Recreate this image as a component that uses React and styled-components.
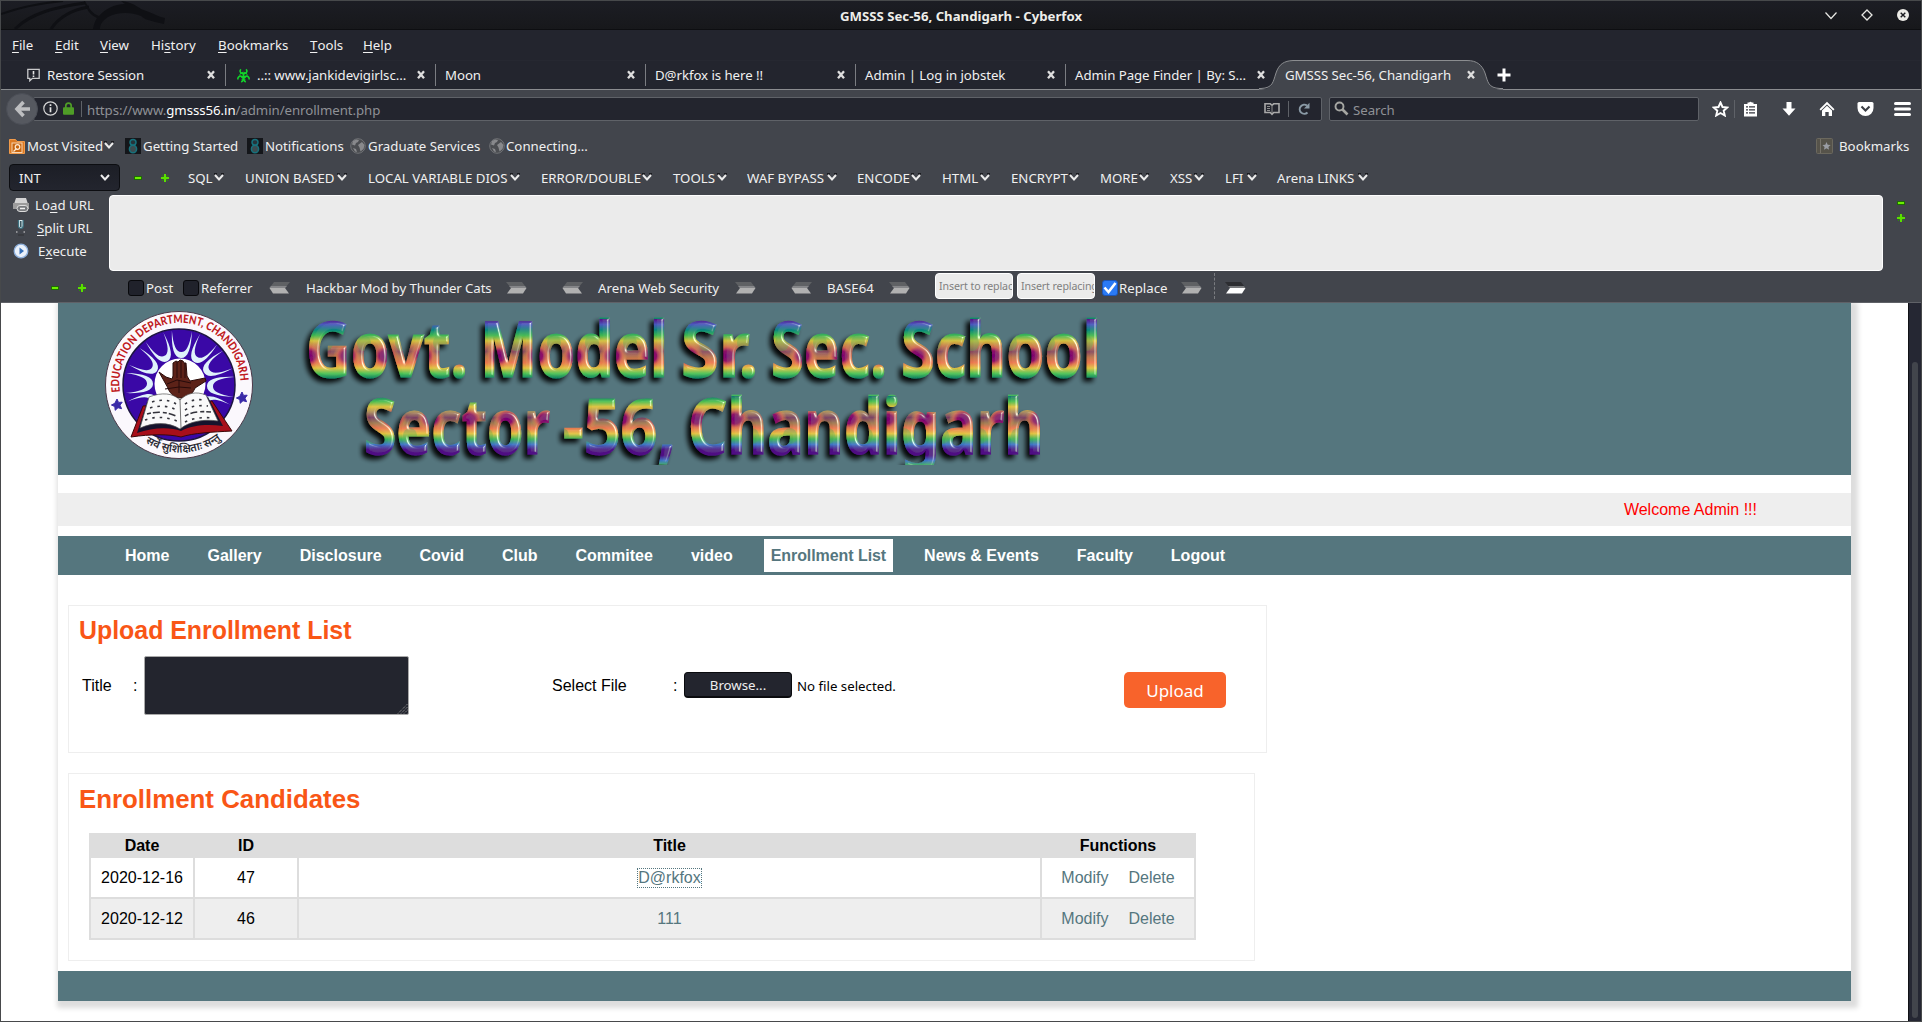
import React from "react";
import styled, { createGlobalStyle, css } from "styled-components";

const teal = "#55767e";
const chrome = "#42454c";
const dark = "#23252e";
const ui = `"Noto Sans", "Open Sans", sans-serif`;
const arial = `"Liberation Sans", Arial, sans-serif`;

const Global = createGlobalStyle`
  * { box-sizing: border-box; }
  html, body { margin: 0; padding: 0; background: ${chrome}; overflow: hidden; }
  svg { display: block; flex: none; }
`;

/* ---------- window ---------- */
const Window = styled.div`
  width: 1922px;
  height: 1022px;
  border: 1px solid #47494b;
  display: flex;
  flex-direction: column;
  background: ${chrome};
  font: 13.25px/18px ${ui};
  color: #f0f0f0;
  white-space: pre;
`;

const TitleBar = styled.header`
  position: relative;
  height: 29px;
  flex: none;
  display: flex;
  align-items: center;
  justify-content: center;
  padding: 2px 0 0 0;
  background: linear-gradient(#1c1d24, #17181b);
  border-bottom: 1px solid #0d0e11;
  font-weight: 700;
  font-size: 13.2px;
  color: #eeeeea;
`;
const Dragon = styled.svg`
  position: absolute;
  left: 0;
  top: 0;
`;
const WindowButtons = styled.div`
  position: absolute;
  right: 12px;
  top: 7px;
  display: flex;
  gap: 24px;
`;

const Bar = styled.div`
  flex: none;
  display: flex;
  align-items: center;
  height: ${(p) => p.$h}px;
  padding-left: ${(p) => p.$pl || 0}px;
  background: ${(p) => p.$bg || "transparent"};
`;
const Slot = styled.div`
  flex: none;
  display: flex;
  align-items: center;
  width: ${(p) => p.$w}px;
  letter-spacing: ${(p) => (p.$tight ? "-0.1px" : "normal")};
`;
const Spacer = styled.div`
  flex: 1;
`;
const Key = styled.span`
  text-decoration: underline;
  text-underline-offset: 2px;
`;

/* ---------- tabs ---------- */
const TabStrip = styled.nav`
  flex: none;
  display: flex;
  align-items: center;
  height: 30px;
  padding-left: 15px;
  background: ${dark};
  border-top: 1px solid #262831;
  border-bottom: 1px solid #8b8d90;
`;
const Tab = styled.div`
  position: relative;
  flex: none;
  width: 210px;
  height: 22px;
  display: flex;
  align-items: center;
  gap: 7px;
  padding: 0 9px 0 ${(p) => (p.$icon ? 11 : 9)}px;
  border-right: 1px solid ${(p) => (p.$last ? "transparent" : "#7b7d82")};
`;
const TabLabel = styled.span`
  position: relative;
  flex: 1;
  min-width: 0;
  letter-spacing: -0.06px;
`;
const TabShape = styled.svg`
  position: absolute;
  left: -17px;
  top: -4px;
`;
const CloseWrap = styled.span`
  position: relative;
`;

/* ---------- navigation ---------- */
const NavBar = styled.div`
  flex: none;
  display: flex;
  align-items: center;
  height: 37px;
  padding: 0 10px 0 5px;
`;
const BackButton = styled.div`
  flex: none;
  position: relative;
  z-index: 1;
  width: 32px;
  height: 32px;
  margin-right: -5px;
  border-radius: 50%;
  background: #565960;
  border: 1px solid #4b4e56;
  display: flex;
  align-items: center;
  justify-content: center;
`;
const Field = styled.div`
  flex: none;
  display: flex;
  align-items: center;
  height: 24px;
  width: ${(p) => p.$w}px;
  background: ${dark};
  border: 1px solid #5f6268;
  border-radius: 2px;
  color: #8f9196;
  padding-left: ${(p) => p.$pl}px;
`;
const FieldText = styled.span`
  padding-top: 2px;
  letter-spacing: -0.06px;
  b {
    font-weight: 400;
    color: #fff;
  }
`;
const Divider = styled.i`
  width: 1px;
  height: ${(p) => p.$h || 16}px;
  background: #5f6268;
  margin: ${(p) => p.$m || "0"};
`;
const Tools = styled.div`
  display: flex;
  align-items: center;
  flex: 1;
  padding-left: 13px;
`;

/* ---------- hackbar ---------- */
const Select = styled.div`
  width: 111px;
  height: 27px;
  display: flex;
  align-items: center;
  justify-content: space-between;
  padding: 0 9px;
  background: linear-gradient(#1c1e26, #23252e);
  border: 1px solid #0c0d11;
  border-radius: 4px;
  margin-right: 14px;
`;
const Menu = styled.div`
  display: flex;
  align-items: center;
  width: ${(p) => p.$w}px;
  flex: none;
`;
const MenuText = styled.span`
  width: ${(p) => p.$w}px;
`;
const EditorRow = styled.div`
  flex: none;
  display: flex;
  height: 76px;
  margin-top: 4px;
`;
const Actions = styled.div`
  width: 108px;
  display: flex;
  flex-direction: column;
  gap: 5px;
  padding: 1px 0 0 12px;
`;
const Action = styled.div`
  display: flex;
  align-items: center;
  height: 18px;
`;
const ActionIcon = styled.span`
  width: ${(p) => p.$w}px;
`;
const Editor = styled.div`
  width: 1774px;
  background: #ebebeb;
  border: 1px solid #fdfdfd;
  border-radius: 4px;
`;
const Resizers = styled.div`
  display: flex;
  flex-direction: column;
  padding: 4px 0 0 14px;
  gap: 7px;
`;
const OptionBar = styled.div`
  flex: none;
  display: flex;
  align-items: center;
  height: 32px;
  padding: 2px 0 0 50px;
  border-bottom: 1px solid #5f6167;
`;
const Check = styled.span`
  width: 16px;
  height: 16px;
  border-radius: 3px;
  background: ${(p) => (p.$on ? "#2a7af5" : "#20222b")};
  border: 1px solid ${(p) => (p.$on ? "#1b55b8" : "#08090c")};
  margin-right: ${(p) => (p.$on ? 1 : 2)}px;
  display: flex;
  align-items: center;
  justify-content: center;
`;
const MiniInput = styled.div`
  width: 78px;
  height: 26px;
  margin: -4px 4px 0 0;
  overflow: hidden;
  background: #ebebeb;
  border: 1px solid #fff;
  border-radius: 4px;
  color: #808080;
  font-size: 10.6px;
  letter-spacing: -0.1px;
  line-height: 24px;
  padding-left: 3px;
`;
const Dashed = styled.i`
  height: 26px;
  border-left: 1px dashed #7a7c80;
  margin: -3px 10px 0 0;
`;

/* ---------- page ---------- */
const Viewport = styled.div`
  flex: 1;
  min-height: 0;
  display: flex;
  background: #fff;
  overflow: hidden;
`;
const Page = styled.div`
  flex: 1;
  padding-left: 57px;
  font: 16px/18px ${arial};
  color: #000;
`;
const Sheet = styled.div`
  width: 1793px;
  height: 698px;
  background: #fff;
  box-shadow: 3px 3px 5px 4px #ddd;
  display: flex;
  flex-direction: column;
`;
const Banner = styled.div`
  height: 172px;
  flex: none;
  display: flex;
  background: ${teal};
  padding: 7px 0 0 47px;
`;
const Welcome = styled.div`
  flex: none;
  margin: 18px 0 10px;
  height: 33px;
  background: #eee;
  color: #f00;
  display: flex;
  align-items: center;
  justify-content: flex-end;
  padding-right: 94px;
`;
const SiteNav = styled.nav`
  flex: none;
  height: 39px;
  background: ${teal};
  display: flex;
  align-items: center;
  gap: 24px;
  padding-left: 60px;
  margin-bottom: 30px;
`;
const NavLink = styled.a`
  height: 33px;
  line-height: 33px;
  padding: 0 7px;
  font-weight: 700;
  color: #fff;
  ${(p) =>
    p.$active &&
    css`
      color: ${teal};
      background: #fff;
      letter-spacing: -0.07px;
    `}
`;
const Panel = styled.section`
  flex: none;
  width: ${(p) => p.$w}px;
  height: ${(p) => p.$h}px;
  margin: 0 0 ${(p) => p.$mb}px 10px;
  border: 1px solid #eee;
`;
const Heading = styled.h2`
  margin: ${(p) => p.$mt}px 0 0 10px;
  font: 700 ${(p) => p.$size}px/30px ${arial};
  color: #f95616;
`;
const Form = styled.div`
  display: flex;
  align-items: center;
  height: 60px;
  margin-top: 10px;
  padding-left: 13px;
`;
const FormText = styled.span`
  width: ${(p) => p.$w}px;
  padding-top: 2px;
`;
const TextArea = styled.div`
  width: 265px;
  height: 59px;
  background: ${dark};
  border: 1px solid #a9a9a9;
  border-radius: 2px;
  display: flex;
  align-items: flex-end;
  justify-content: flex-end;
  margin-right: 143px;
`;
const Browse = styled.div`
  width: 108px;
  height: 26px;
  border-radius: 4px;
  border: 1px solid #0a0b0e;
  border-bottom-width: 2px;
  background: ${dark};
  color: #eee;
  font: 13.25px/25px ${ui};
  text-align: center;
  margin: 0 5px 0 0;
`;
const FileName = styled.span`
  font: 13.25px/18px ${ui};
  width: 327px;
  padding-top: 1px;
`;
const Upload = styled.div`
  width: 102px;
  height: 36px;
  margin-top: 10px;
  border-radius: 5px;
  background: #f8632b;
  color: #fff;
  font: 17px/38px ${ui};
  text-align: center;
`;
const Table = styled.div`
  width: 1107px;
  margin: 19px 0 0 20px;
  padding: 0 2px 2px;
  background: #ddd;
  display: grid;
  grid-template-columns: 102px 102px 741px 152px;
  grid-template-rows: 25px 39px 41px;
  column-gap: 2px;
`;
const HeadCell = styled.div`
  font-weight: 700;
  line-height: 25px;
  text-align: center;
`;
const Cell = styled.div`
  display: flex;
  align-items: center;
  justify-content: center;
  gap: 20px;
  background: ${(p) => (p.$alt ? "#eee" : "#fff")};
  margin-top: ${(p) => (p.$alt ? 2 : 0)}px;
  height: 39px;
`;
const Link = styled.a`
  color: ${teal};
  line-height: 18px;
  outline: ${(p) => (p.$focus ? `1px dotted ${teal}` : "none")};
`;
const Footer = styled.div`
  flex: none;
  height: 30px;
  background: ${teal};
`;
const ScrollTrack = styled.div`
  width: 13px;
  background: #252733;
  border-left: 1px solid #101116;
  padding: 59px 0 3px 3px;
`;
const ScrollThumb = styled.div`
  width: 6px;
  height: 100%;
  border-radius: 3px;
  background: #42454c;
`;

/* ---------- icons ---------- */
const Chevron = () => (
  <svg width="10" height="9" viewBox="0 0 10 9">
    <path d="M0 0h3v1.500H0zM7 0h3v1.500H7z" fill="#1a1b1f" />
    <path d="M1 2l4 4.500 4-4.500" fill="none" stroke="#ececec" strokeWidth="2" />
  </svg>
);
const Minus = () => (
  <svg width="8" height="8" viewBox="0 0 8 8">
    <rect x="0" y="2" width="8" height="4" fill="#1f6b06" />
    <rect x="1" y="3" width="6" height="2" fill="#6bf000" />
  </svg>
);
const Plus = () => (
  <svg width="8" height="8" viewBox="0 0 8 8">
    <path d="M3 0h2v3h3v2H5v3H3V5H0V3h3z" fill="#5ae000" />
    <path d="M1 1h1v1H1zM6 1h1v1H6zM1 6h1v1H1zM6 6h1v1H6zM2 2h1v1H2zM5 2h1v1H5zM2 5h1v1H2zM5 5h1v1H5z" fill="#2f8a08" />
  </svg>
);
const Close = () => (
  <svg width="10" height="10" viewBox="0 0 10 10">
    <path d="M2 1.300l6 7M8 1.300l-6 7" stroke="#dedede" strokeWidth="2.300" />
  </svg>
);
const FlippedSvg = styled.svg`
  transform: ${(p) => (p.$flip ? "scaleX(-1)" : "none")};
`;
const Arrow = ({ flip, white }) => (
  <FlippedSvg $flip={flip} width="21" height="12" viewBox="0 0 21 12">
    <path d="M0 0H16L20.500 6H5z" fill={white ? "#2c2d31" : "#5f6164"} />
    <path d="M3 4H19L20.500 6H5z" fill={white ? "#77797c" : "#858689"} />
    <path d="M5 6H20.500L17 11.500H1z" fill={white ? "#ffffff" : "#b1b1b1"} />
  </FlippedSvg>
);
const HorseIcon = () => (
  <svg width="16" height="16" viewBox="0 0 16 16">
    <rect width="16" height="16" fill="#14161a" />
    <ellipse cx="8" cy="4.300" rx="3" ry="2.900" fill="#26343a" stroke="#17717c" strokeWidth="1.500" />
    <ellipse cx="8" cy="11" rx="3.600" ry="3.700" fill="#3d4c50" stroke="#17717c" strokeWidth="1.500" />
  </svg>
);
const Globe = () => (
  <svg width="16" height="16" viewBox="0 0 16 16">
    <circle cx="8" cy="8" r="7.300" fill="#4b4d51" stroke="#707276" />
    <path d="M3 3l3-1.500 3 .5-1 2-2 1-1 2.500-3-1zM8 7l4-3 2.500 3-1 4-3 2.500-1-4zM3 10l3 1 1 3-2-.5z" fill="#88898c" />
  </svg>
);
const FeedFolder = () => (
  <svg width="16" height="16" viewBox="0 0 16 16">
    <path d="M.5 1.500h6l1.500 2h7.500v12H.5z" fill="#dd7a22" stroke="#f19b4b" />
    <rect x="3" y="5" width="10" height="9.500" fill="#c7650f" stroke="#f8d6b4" />
    <circle cx="8.500" cy="9" r="2.300" fill="none" stroke="#ffe9d2" strokeWidth="1.200" />
    <path d="M4.500 13.500l3-3" stroke="#ffe9d2" strokeWidth="1.200" />
  </svg>
);
const Notice = () => (
  <svg width="13" height="14" viewBox="0 0 13 14">
    <path d="M.8 1.300h11.400v9H5.500L2.800 12.800V10.300H.8z" fill="none" stroke="#c9cacc" strokeWidth="1.300" />
    <path d="M6.500 3v3.500M6.500 7.500v1.500" stroke="#e4e4e4" strokeWidth="1.600" />
  </svg>
);
const Biohazard = () => (
  <svg width="13" height="15" viewBox="0 0 13 15">
    <g fill="none" stroke="#12d42a">
      <path d="M3.800 1.200C2 3.500 3.800 5.800 6.500 5.800S11 3.500 9.200 1.200" strokeWidth="1.600" />
      <path d="M.9 11.500C.5 8.800 2.800 7.300 4.800 8.600S6.600 12.800 4.200 14" strokeWidth="1.600" />
      <path d="M12.100 11.500C12.500 8.800 10.200 7.300 8.200 8.600S6.400 12.800 8.800 14" strokeWidth="1.600" />
      <path d="M6.500 5.500v3M6.500 8L4.300 9.500M6.500 8l2.200 1.500" strokeWidth="1.800" />
      <path d="M2.800 7.500C3 5.500 4 4.300 6.500 4.300s3.500 1.200 3.700 3.200M4.500 11.800q2 1 4 0" strokeWidth="1" />
    </g>
  </svg>
);

const Titles = () => (
  <TitleBar>
    <Dragon width="170" height="28" viewBox="0 0 170 28">
      <g fill="none" stroke="#0f1014">
        <path d="M0 13C20 6 40 2 62 0" strokeWidth="2" />
        <path d="M14 28C30 12 55 6 84 2" strokeWidth="3" />
        <path d="M50 28C58 16 70 9 88 6" strokeWidth="3" />
      </g>
      <path
        d="M84 0C88 8 92 13 98 15c6-7 15-12 26-12l-4-3c10 1 16 5 20 8l8 3c6 2 10 5 16 6l-1 6-9-2c-6-2-10-2-14-6-10-4-24-4-33 1-6 4-8 8-8 12h-7c1-5 2-8 4-11-7-3-11-9-13-17z"
        fill="#0f1014"
      />
    </Dragon>
    GMSSS Sec-56, Chandigarh - Cyberfox
    <WindowButtons>
      <svg width="12" height="14" viewBox="0 0 12 14">
        <path d="M.5 4.500l5.500 6 5.500-6" fill="none" stroke="#e8e8e4" strokeWidth="1.200" />
      </svg>
      <svg width="12" height="14" viewBox="0 0 12 14">
        <path d="M6 2l5 5-5 5-5-5z" fill="none" stroke="#e8e8e4" strokeWidth="1.300" />
      </svg>
      <svg width="12" height="14" viewBox="0 0 12 14">
        <circle cx="6" cy="7" r="6" fill="#ecebe6" />
        <path d="M3.700 4.700l4.600 4.600M8.300 4.700L3.700 9.300" stroke="#1a1b1f" strokeWidth="1.400" />
      </svg>
    </WindowButtons>
  </TitleBar>
);

const menus = [
  ["", "F", "ile", 43],
  ["", "E", "dit", 45],
  ["", "V", "iew", 51],
  ["Hi", "s", "tory", 67],
  ["", "B", "ookmarks", 92],
  ["", "T", "ools", 53],
  ["", "H", "elp", 60],
];

const tabs = [
  ["Restore Session", Notice],
  ["..:: www.jankidevigirlsc...", Biohazard],
  ["Moon"],
  ["D@rkfox is here !!"],
  ["Admin | Log in jobstek"],
  ["Admin Page Finder | By: S..."],
];

const hackMenus = [
  ["SQL", 26, 57],
  ["UNION BASED", 92, 123],
  ["LOCAL VARIABLE DIOS", 142, 173],
  ["ERROR/DOUBLE", 101, 132],
  ["TOOLS", 44, 74],
  ["WAF BYPASS", 80, 110],
  ["ENCODE", 54, 85],
  ["HTML", 38, 69],
  ["ENCRYPT", 58, 89],
  ["MORE", 39, 70],
  ["XSS", 24, 55],
  ["LFI", 22, 52],
  ["Arena LINKS", 81, 100],
];

const rays = [-4, -3, -2, -1, 0, 1, 2, 3, 4];
const Seal = () => (
  <svg width="150" height="150" viewBox="0 0 150 150">
    <defs>
      <path id="arcTop" d="M15 82A60.500 60.500 0 1 1 135 80" />
      <path id="arcBottom" d="M30 125A68 68 0 0 0 128 118" />
    </defs>
    <circle cx="74" cy="75" r="73.500" fill="#fbf8fd" stroke="#4c3a4a" strokeWidth="1" />
    <circle cx="74" cy="75" r="56" fill="#3a08a6" stroke="#1c1440" strokeWidth="1.500" />
    <g fill="#dff2fb">
      {rays.map((k) => (
        <path
          key={k}
          d="M65 21C67 36 70 42 75 42S83 36 85 21C85 38 82 48 75 48S65 38 65 21z"
          transform={`rotate(${k * 30 + 2} 75 75)`}
        />
      ))}
    </g>
    <circle cx="75" cy="74" r="25.500" fill="#fff" />
    <path
      d="M54 62l7 5 6 2 1-3V53l3-2 2 1 2-2 3 1 1 2 2 0 1 13 3 5 15-3 1 3-11 7c-3 7-7 10-14 10-6 0-11-4-13-10z"
      fill="#5c2218"
      stroke="#2b0d0a"
      strokeWidth="1"
    />
    <path d="M62 74l10-4 14 3M72 52v16M76 51v17M80 53v15M74 70v13M60 79l14-2 12 1" stroke="#260a0a" fill="none" />
    <path d="M38 96L26 127c20-3 38-3 50 0 12-4 32-5 51-6L107 91z" fill="#a80f1a" stroke="#3a0808" />
    <path d="M42 92L32 123c16-6 34-6 44-2 11-6 26-7 42-5L103 87z" fill="#16132c" />
    <path d="M44 87c13-5 24-4 31 3 7-7 16-9 26-5l12 26c-14-2-28 0-38 8-11-7-26-7-40-1z" fill="#fafafa" stroke="#555" strokeWidth=".7" />
    <path d="M75 90l1 28" stroke="#777" />
    <g stroke="#33333b" strokeWidth="1.600" strokeDasharray="2.500 5" fill="none">
      <path d="M47 92c10-3 18-2 24 2" />
      <path d="M45 98c10-3 20-2 26 2" />
      <path d="M42 104c10-3 20-2 29 2" strokeDasharray="4 2 7 3" />
      <path d="M40 110c10-4 22-3 32 1" />
      <path d="M80 94c6-4 12-5 20-4" />
      <path d="M80 100c6-4 14-5 23-4" />
      <path d="M80 106c6-4 16-5 26-4" strokeDasharray="4 2 7 3" />
      <path d="M80 112c8-4 18-5 28-4" />
    </g>
    <path d="M12 89l1.500 3.400 3.700-.2-2.200 3 1.600 3.500-3.600-1-2.800 2.600-.4-3.700-3.400-1.600 3.400-1.700z" fill="#3a2aa8" stroke="#3a2aa8" />
    <path d="M137 82l1.500 3.400 3.700-.2-2.200 3 1.600 3.500-3.600-1-2.800 2.600-.4-3.700-3.400-1.600 3.400-1.700z" fill="#3a2aa8" stroke="#3a2aa8" />
    <text fill="#c01a22" fontFamily="Lato, sans-serif" fontWeight="900" fontSize="11.500">
      <textPath href="#arcTop" textLength="196" lengthAdjust="spacingAndGlyphs">
        EDUCATION DEPARTMENT, CHANDIGARH
      </textPath>
    </text>
    <text fill="#2a2a33" fontFamily="Noto Sans, sans-serif" fontWeight="600" fontSize="11">
      <textPath href="#arcBottom" startOffset="13" textLength="80" lengthAdjust="spacingAndGlyphs">
        सर्वे सुशिक्षिताः सन्तु
      </textPath>
    </text>
  </svg>
);

const words = [
  ["Govt.", 201, 162, 67],
  ["Model", 375, 188, 67],
  ["Sr.", 576, 77, 67],
  ["Sec.", 666, 116, 67],
  ["School", 796, 200, 67],
  ["Sector", 259, 186, 144],
  ["-56,", 458, 113, 144],
  ["Chandigarh", 583, 356, 144],
];

const WordArtBox = styled.svg`
  margin-left: -150px;
`;
const bandsOne = ["#5a0a86", "#4a58c0", "#0c8a80", "#3fba52", "#d8c43c", "#c87a50", "#8a4a60", "#c0784c", "#f07a50", "#e6c640", "#4cc456", "#08806a"];
const bandsTwo = ["#0a7a70", "#48c050", "#e4c63c", "#b09060", "#7a3a62", "#a07a50", "#f07a50", "#e6c640", "#3cb858", "#3f78c8", "#520a86", "#520a86", "#3f78c8", "#48c050"];
const stops = (colors) => colors.map((c, i) => <stop key={i} offset={i / (colors.length - 1)} stopColor={c} />);

const WordArt = () => (
  <WordArtBox width="1110" height="155" viewBox="0 0 1110 155">
    <defs>
      <linearGradient id="g1" x1="0" y1="0" x2="0" y2="1">
        {stops(bandsOne)}
      </linearGradient>
      <linearGradient id="g2" x1="0" y1="0" x2="0" y2="1">
        {stops(bandsTwo)}
      </linearGradient>
      <radialGradient id="blob">
        <stop offset="0" stopColor="#780078" />
        <stop offset=".4" stopColor="#900a6a" stopOpacity=".95" />
        <stop offset=".7" stopColor="#e06a50" stopOpacity=".7" />
        <stop offset="1" stopColor="#e0b040" stopOpacity="0" />
      </radialGradient>
      <pattern id="p1" patternUnits="userSpaceOnUse" x="0" y="9" width="38" height="60">
        <rect width="38" height="60" fill="url(#g1)" />
        <ellipse cx="14" cy="37" rx="14" ry="13" fill="url(#blob)" />
        <ellipse cx="31" cy="24" rx="7" ry="8" fill="#4fae54" opacity=".35" />
      </pattern>
      <pattern id="p2" patternUnits="userSpaceOnUse" x="8" y="86" width="38" height="70">
        <rect width="38" height="70" fill="url(#g2)" />
        <ellipse cx="14" cy="23" rx="14" ry="12" fill="url(#blob)" />
        <ellipse cx="31" cy="40" rx="7" ry="8" fill="#4fae54" opacity=".35" />
      </pattern>
      <filter id="bevel" x="-5%" y="-20%" width="110%" height="140%">
        <feGaussianBlur in="SourceAlpha" stdDeviation="1.300" result="b" />
        <feSpecularLighting in="b" surfaceScale="3" specularConstant="1" specularExponent="20" lightingColor="#f2ffe8" result="s">
          <feDistantLight azimuth="-25" elevation="24" />
        </feSpecularLighting>
        <feComposite in="s" in2="SourceAlpha" operator="in" result="s2" />
        <feComposite in="SourceGraphic" in2="s2" operator="arithmetic" k1="0" k2="0.95" k3="0.75" k4="0" result="lit" />
        <feGaussianBlur in="SourceAlpha" stdDeviation="2.500" />
        <feOffset dx="-4" dy="4" result="sh" />
        <feComponentTransfer in="sh" result="sh2">
          <feFuncA type="linear" slope="0.95" />
        </feComponentTransfer>
        <feMerge>
          <feMergeNode in="sh2" />
          <feMergeNode in="lit" />
        </feMerge>
      </filter>
    </defs>
    <g filter="url(#bevel)" fontFamily="Noto Sans, Open Sans, sans-serif" fontWeight="700" fontSize="77">
      {words.map(([t, x, w, y]) => {
        const fill = y > 100 ? "url(#p2)" : "url(#p1)";
        return (
          <text key={t} x={x} y={y} textLength={w} lengthAdjust="spacingAndGlyphs" fill={fill} stroke={fill} strokeWidth="1.200">
            {t}
          </text>
        );
      })}
    </g>
  </WordArtBox>
);

const links = ["Home", "Gallery", "Disclosure", "Covid", "Club", "Commitee", "video", "Enrollment List", "News & Events", "Faculty", "Logout"];
const rows = [
  ["2020-12-16", "47", "D@rkfox"],
  ["2020-12-12", "46", "111"],
];

export default function App() {
  return (
    <Window>
      <Global />
      <Titles />
      <Bar $h={30} $pl={11} $bg={dark}>
        {menus.map(([a, k, b, w]) => (
          <Slot key={k + b} $w={w}>
            {a}
            <Key>{k}</Key>
            {b}
          </Slot>
        ))}
      </Bar>
      <TabStrip>
        {tabs.map(([label, Icon], i) => (
          <Tab key={label} $icon={!!Icon} $last={i === 5}>
            {Icon && <Icon />}
            <TabLabel>{label}</TabLabel>
            <Close />
          </Tab>
        ))}
        <Tab $last>
          <TabShape width="244" height="30" viewBox="0 0 244 30">
            <path d="M0 29.500H2C14 29 14 22 17 13 20 4 25 1 34 .500H208C218 .500 223 5 226 13 229 22 229 28 241 29.500H244V30H0z" fill={chrome} />
            <path d="M0 28.500H2C14 28 14 22 17 13 20 4 25 1 34 .500H208C218 .500 223 5 226 13 229 22 229 28 241 28.500H244" fill="none" stroke="#8b8d90" />
          </TabShape>
          <TabLabel>GMSSS Sec-56, Chandigarh</TabLabel>
          <CloseWrap>
            <Close />
          </CloseWrap>
        </Tab>
        <Slot $w={30}>
          <svg width="40" height="14" viewBox="-10 0 40 14">
            <path d="M8 .500v13M1.500 7h13" stroke="#fff" strokeWidth="3" />
          </svg>
        </Slot>
      </TabStrip>
      <NavBar>
        <BackButton>
          <svg width="17" height="18" viewBox="0 0 17 18">
            <path d="M9.500 2L3 9l6.500 7M4 9h12" fill="none" stroke="#bdbec0" strokeWidth="3.600" />
          </svg>
        </BackButton>
        <Field $w={1289} $pl={9}>
          <Slot $w={20}>
            <svg width="15" height="15" viewBox="0 0 15 15">
              <circle cx="7.500" cy="7.500" r="6.700" fill="none" stroke="#d5d5d5" strokeWidth="1.200" />
              <path d="M7.500 3.200v1.700M7.500 6.200v5" stroke="#e5e5e5" strokeWidth="1.700" />
            </svg>
          </Slot>
          <Slot $w={18}>
            <svg width="11" height="13" viewBox="0 0 11 13">
              <path d="M2.800 6V3.800a2.700 2.700 0 0 1 5.400 0V6" fill="none" stroke="#4f9d27" strokeWidth="1.700" />
              <rect x="0" y="5.300" width="11" height="7.500" rx="1" fill="#4f9d27" />
            </svg>
          </Slot>
          <Divider $m="0 5px 0 0" />
          <FieldText>
            https://www.<b>gmsss56.in</b>/admin/enrollment.php
          </FieldText>
          <Spacer />
          <svg width="16" height="14" viewBox="0 0 16 14">
            <path d="M1 1.800h5.300L8 3.300l1.700-1.500H15v8.700H9.700L8 12.300l-1.700-1.800H1z" fill="none" stroke="#a9a9a9" strokeWidth="1.600" />
            <path d="M8 3v8M3 4.500h3M3 6.500h3M3 8.500h3" stroke="#8d8d8d" />
          </svg>
          <Divider $m="0 9px 0 8px" />
          <svg width="13" height="14" viewBox="0 0 13 14">
            <path d="M9.500 10.600A4.600 4.600 0 1 1 9 3.500" fill="none" stroke="#8a9aa6" strokeWidth="2" />
            <path d="M11.500.8v5.700H6z" fill="#8a9aa6" />
          </svg>
          <Slot $w={10} />
        </Field>
        <Slot $w={7} />
        <Field $w={370} $pl={4}>
          <svg width="15" height="15" viewBox="0 0 15 15">
            <circle cx="5.500" cy="5.500" r="4" fill="none" stroke="#a5a6a2" strokeWidth="1.900" />
            <path d="M8.500 8.500l5 5" stroke="#a5a6a2" strokeWidth="2.600" />
          </svg>
          <Slot $w={4} />
          <FieldText>Search</FieldText>
        </Field>
        <Tools>
          <Slot $w={22}>
            <svg width="17" height="16" viewBox="0 0 17 16">
              <path d="M8.500 1.500l2 4.500 4.900.5-3.700 3.200 1.100 4.800-4.300-2.500-4.300 2.500 1.100-4.800L1.600 6.500l4.900-.5z" fill="none" stroke="#fff" strokeWidth="1.900" />
            </svg>
          </Slot>
          <Divider $h={18} $m="0 8px 0 0" />
          <Slot $w={39}>
            <svg width="15" height="16" viewBox="0 0 15 16">
              <path d="M1 3h3.500V1.500h1.700a1.500 1.500 0 0 1 2.600 0h1.700V3H14v12.500H1z" fill="#fff" />
              <path d="M3 5.800h2M6 5.800h6M3 8.800h2M6 8.800h6M3 11.800h2M6 11.800h6" stroke="#33353c" strokeWidth="1.300" />
            </svg>
          </Slot>
          <Slot $w={37}>
            <svg width="14" height="16" viewBox="0 0 14 16">
              <path d="M4.500 1h5v6.500h4L7 14.800.500 7.500h4z" fill="#fff" />
            </svg>
          </Slot>
          <Slot $w={38}>
            <svg width="16" height="16" viewBox="0 0 16 16">
              <path d="M8 .8l7.500 7.500-1.300 1.200L8 3.400 1.800 9.500.500 8.300z" fill="#fff" />
              <path d="M3 9.600l5-4.900 5 4.900V15H9.700v-4H6.300v4H3z" fill="#fff" />
            </svg>
          </Slot>
          <Slot $w={37}>
            <svg width="17" height="16" viewBox="0 0 17 16">
              <path d="M.5 2.500Q.5 1 2 1h13q1.500 0 1.500 1.500V7a8 8 0 0 1-16 0z" fill="#fff" />
              <path d="M4.500 5.500l4 4 4-4" fill="none" stroke="#3a3d44" strokeWidth="2.100" />
            </svg>
          </Slot>
          <svg width="17" height="16" viewBox="0 0 17 16">
            <path d="M1.500 2.500h14M1.500 8h14M1.500 13.500h14" stroke="#fff" strokeWidth="3" strokeLinecap="round" />
          </svg>
        </Tools>
      </NavBar>
      <Bar $h={37} $pl={8}>
        <Slot $w={18}><FeedFolder /></Slot>
        <Slot $w={77}>Most Visited</Slot>
        <Slot $w={21}><Chevron /></Slot>
        <Slot $w={18}><HorseIcon /></Slot>
        <Slot $w={104}>Getting Started</Slot>
        <Slot $w={18}><HorseIcon /></Slot>
        <Slot $w={85}>Notifications</Slot>
        <Slot $w={18}><Globe /></Slot>
        <Slot $w={121}>Graduate Services</Slot>
        <Slot $w={17}><Globe /></Slot>
        Connecting...
        <Spacer />
        <Slot $w={23}>
          <svg width="17" height="16" viewBox="0 0 17 16">
            <rect x=".5" y=".5" width="16" height="15" rx="1" fill="#56534a" stroke="#6b685e" />
            <path d="M4.500 1v14" stroke="#77736a" />
            <path d="M10.500 4l1.200 2.700 2.900.3-2.200 1.900.7 2.900-2.600-1.500-2.600 1.500.7-2.900L6.400 7l2.900-.3z" fill="#9a9da4" />
          </svg>
        </Slot>
        <Slot $w={82}>Bookmarks</Slot>
      </Bar>
      <Bar $h={27} $pl={8}>
        <Select>
          INT <Chevron />
        </Select>
        <Slot $w={27}><Minus /></Slot>
        <Slot $w={27}><Plus /></Slot>
        {hackMenus.map(([label, tw, w]) => (
          <Menu key={label} $w={w}>
            <MenuText $w={tw}>{label}</MenuText>
            <Chevron />
          </Menu>
        ))}
      </Bar>
      <EditorRow>
        <Actions>
          <Action>
            <ActionIcon $w={22}>
              <svg width="16" height="14" viewBox="0 0 16 14">
                <path d="M3 0h10l2 6H1z" fill="#d4d4d4" />
                <path d="M0 5h16v6H0z" fill="#9c9c9c" />
                <rect x="4" y="7.500" width="11" height="6" rx="3" fill="#77797c" stroke="#ddd" />
                <path d="M7 10.500h5" stroke="#eee" strokeWidth="1.500" />
              </svg>
            </ActionIcon>
            Lo<Key>a</Key>d URL
          </Action>
          <Action>
            <ActionIcon $w={24}>
              <svg width="16" height="18" viewBox="0 0 16 18">
                <path d="M5.500 1v6a2.300 2.300 0 0 0 4.600 0V1" fill="#dfeef2" stroke="#3f7483" strokeWidth="1.300" />
                <path d="M7.800 2v6" stroke="#2c4650" strokeWidth="1.400" />
                <path d="M3 13h1.500M10.500 13H12" stroke="#ddd" />
                <path d="M5 15h6v2H5z" fill="#393b40" />
              </svg>
            </ActionIcon>
            <Key>S</Key>plit URL
          </Action>
          <Action>
            <ActionIcon $w={25}>
              <svg width="16" height="16" viewBox="0 0 16 16">
                <circle cx="8" cy="8" r="6.800" fill="#eaf1fb" stroke="#8fb1dd" strokeWidth="1.300" />
                <path d="M6.500 4.500L11 8l-4.500 3.500z" fill="#356fb8" />
              </svg>
            </ActionIcon>
            E<Key>x</Key>ecute
          </Action>
        </Actions>
        <Editor />
        <Resizers>
          <Minus />
          <Plus />
        </Resizers>
      </EditorRow>
      <OptionBar>
        <Slot $w={27}><Minus /></Slot>
        <Slot $w={50}><Plus /></Slot>
        <Slot $w={55}><Check />Post</Slot>
        <Slot $w={86}><Check />Referrer</Slot>
        <Slot $w={37}><Arrow flip /></Slot>
        <Slot $w={200} $tight>Hackbar Mod by Thunder Cats</Slot>
        <Slot $w={56}><Arrow /></Slot>
        <Slot $w={36}><Arrow flip /></Slot>
        <Slot $w={137}>Arena Web Security</Slot>
        <Slot $w={56}><Arrow /></Slot>
        <Slot $w={36}><Arrow flip /></Slot>
        <Slot $w={62}>BASE64</Slot>
        <Slot $w={46}><Arrow /></Slot>
        <MiniInput>Insert to replace</MiniInput>
        <MiniInput>Insert replacing</MiniInput>
        <Slot $w={82}>
          <Slot $w={3} />
          <Check $on>
            <svg width="14" height="13" viewBox="0 0 14 13">
              <path d="M1.500 6.500l4 4.500L12.500 2" fill="none" stroke="#fff" strokeWidth="2.600" />
            </svg>
          </Check>
          Replace
        </Slot>
        <Slot $w={33}><Arrow /></Slot>
        <Dashed />
        <Arrow white />
      </OptionBar>
      <Viewport>
        <Page>
          <Sheet>
            <Banner>
              <Seal />
              <WordArt />
            </Banner>
            <Welcome>Welcome Admin !!!</Welcome>
            <SiteNav>
              {links.map((l) => (
                <NavLink key={l} $active={l === "Enrollment List"}>{l}</NavLink>
              ))}
            </SiteNav>
            <Panel $w={1199} $h={148} $mb={20}>
              <Heading $mt={9} $size={24.9}>Upload Enrollment List</Heading>
              <Form>
                <FormText $w={51}>Title</FormText>
                <FormText $w={11}>:</FormText>
                <TextArea>
                  <svg width="11" height="11" viewBox="0 0 11 11">
                    <path d="M1 10.500L10.500 1M4 10.500L10.500 4M7 10.500L10.500 7" stroke="#a9a9a9" strokeDasharray="1 1" />
                  </svg>
                </TextArea>
                <FormText $w={121}>Select File</FormText>
                <FormText $w={11}>:</FormText>
                <Browse>Browse...</Browse>
                <FileName>No file selected.</FileName>
                <Upload>Upload</Upload>
              </Form>
            </Panel>
            <Panel $w={1187} $h={188} $mb={10}>
              <Heading $mt={10} $size={25.85}>Enrollment Candidates</Heading>
              <Table>
                {["Date", "ID", "Title", "Functions"].map((h) => (
                  <HeadCell key={h}>{h}</HeadCell>
                ))}
                {rows.map(([date, id, title], i) => (
                  <React.Fragment key={id}>
                    <Cell $alt={i === 1}>{date}</Cell>
                    <Cell $alt={i === 1}>{id}</Cell>
                    <Cell $alt={i === 1}>
                      <Link $focus={i === 0}>{title}</Link>
                    </Cell>
                    <Cell $alt={i === 1}>
                      <Link>Modify</Link>
                      <Link>Delete</Link>
                    </Cell>
                  </React.Fragment>
                ))}
              </Table>
            </Panel>
            <Footer />
          </Sheet>
        </Page>
        <ScrollTrack>
          <ScrollThumb />
        </ScrollTrack>
      </Viewport>
    </Window>
  );
}
